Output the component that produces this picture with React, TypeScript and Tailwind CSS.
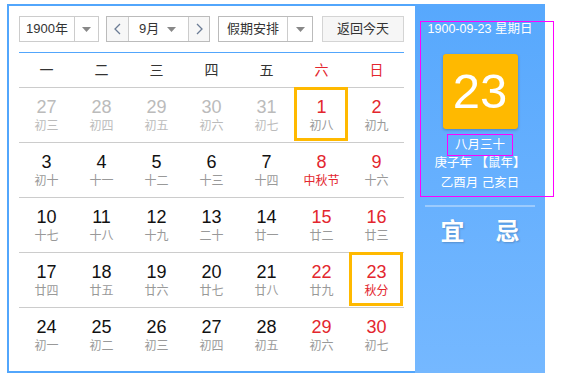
import React from "react";

type Day = {
  n: number;
  l: string;
  other?: boolean;
  red?: boolean;
  fest?: boolean;
  sel?: boolean;
};

const WEEK = ["一", "二", "三", "四", "五", "六", "日"];

const ROWS: Day[][] = [
  [
    { n: 27, l: "初三", other: true },
    { n: 28, l: "初四", other: true },
    { n: 29, l: "初五", other: true },
    { n: 30, l: "初六", other: true },
    { n: 31, l: "初七", other: true },
    { n: 1, l: "初八", red: true, sel: true },
    { n: 2, l: "初九", red: true },
  ],
  [
    { n: 3, l: "初十" },
    { n: 4, l: "十一" },
    { n: 5, l: "十二" },
    { n: 6, l: "十三" },
    { n: 7, l: "十四" },
    { n: 8, l: "中秋节", red: true, fest: true },
    { n: 9, l: "十六", red: true },
  ],
  [
    { n: 10, l: "十七" },
    { n: 11, l: "十八" },
    { n: 12, l: "十九" },
    { n: 13, l: "二十" },
    { n: 14, l: "廿一" },
    { n: 15, l: "廿二", red: true },
    { n: 16, l: "廿三", red: true },
  ],
  [
    { n: 17, l: "廿四" },
    { n: 18, l: "廿五" },
    { n: 19, l: "廿六" },
    { n: 20, l: "廿七" },
    { n: 21, l: "廿八" },
    { n: 22, l: "廿九", red: true },
    { n: 23, l: "秋分", red: true, fest: true, sel: true },
  ],
  [
    { n: 24, l: "初一" },
    { n: 25, l: "初二" },
    { n: 26, l: "初三" },
    { n: 27, l: "初四" },
    { n: 28, l: "初五" },
    { n: 29, l: "初六", red: true },
    { n: 30, l: "初七", red: true },
  ],
];

const Caret = () => (
  <svg width="9" height="5" viewBox="0 0 9 5">
    <path d="M0 0h9L4.5 5z" fill="#888" />
  </svg>
);

const Chevron = ({ dir }: { dir: "l" | "r" }) => (
  <svg width="7" height="12" viewBox="0 0 7 12">
    <path
      d={dir === "l" ? "M6 1L1 6l5 5" : "M1 1l5 5-5 5"}
      fill="none"
      stroke="#6b7c95"
      strokeWidth="1.3"
    />
  </svg>
);

const DayCell = ({ d }: { d: Day }) => {
  const numColor = d.other ? "text-[#bbbbbb]" : d.red ? "text-[#e3262e]" : "text-[#111]";
  const lunarColor = d.other ? "text-[#bbbbbb]" : d.fest ? "text-[#e3262e]" : "text-[#999]";
  return (
    <div className="relative h-[55px] border-t border-[#cccccc] flex flex-col items-center pt-[9px]">
      <div className={`text-[18px] leading-[20px] font-['Liberation_Sans'] ${numColor}`}>{d.n}</div>
      <div className={`mt-[1px] text-[12px] leading-[16px] ${lunarColor}`}>{d.l}</div>
      {d.sel && (
        <div className="absolute left-0 top-[-1px] w-[54px] h-[54px] border-[3px] border-[#ffb900]" />
      )}
    </div>
  );
};

export default function App() {
  return (
    <div className="w-[568px] h-[373px] bg-white pt-[4px] pl-[7px] text-[#333] font-['Liberation_Sans','Noto_Sans_CJK_SC',sans-serif]">
      <div className="flex w-[538px] h-[369px]">
        {/* calendar */}
        <div className="w-[408px] h-full border-2 border-r-0 border-[#52a6fc] pt-[10px] pl-[10px]">
          <div className="flex h-[26px] text-[13px]">
            <div className="flex w-[80px] border border-[#cccccc]">
              <div className="flex-1 flex items-center justify-center">1900年</div>
              <div className="w-[24px] border-l border-[#cccccc] flex items-center justify-center">
                <Caret />
              </div>
            </div>
            <div className="ml-[7px] flex w-[104px] border border-[#bbbbbb]">
              <div className="w-[22px] bg-[#f7f7f7] border-r border-[#cccccc] flex items-center justify-center">
                <Chevron dir="l" />
              </div>
              <div className="flex-1 flex items-center justify-between pl-[10px] pr-[12px]">
                <span>9月</span>
                <Caret />
              </div>
              <div className="w-[21px] bg-[#f7f7f7] border-l border-[#cccccc] flex items-center justify-center">
                <Chevron dir="r" />
              </div>
            </div>
            <div className="ml-[8px] flex w-[95px] border border-[#bbbbbb]">
              <div className="flex-1 flex items-center justify-center">假期安排</div>
              <div className="w-[25px] border-l border-[#cccccc] flex items-center justify-center">
                <Caret />
              </div>
            </div>
            <div className="ml-[9px] w-[82px] border border-[#d4d4d4] bg-[#f6f6f6] flex items-center justify-center">
              返回今天
            </div>
          </div>

          <div className="w-[385px] mt-[10px] border-t border-[#52a6fc]">
            <div className="grid grid-cols-7 h-[34px] items-center text-[14px]">
              {WEEK.map((w, i) => (
                <div key={w} className={`text-center ${i >= 5 ? "text-[#e3262e]" : "text-[#333]"}`}>
                  {w}
                </div>
              ))}
            </div>
            {ROWS.map((row, ri) => (
              <div key={ri} className="grid grid-cols-7">
                {row.map((d, di) => (
                  <DayCell key={di} d={d} />
                ))}
              </div>
            ))}
          </div>
        </div>

        {/* side panel */}
        <div className="w-[130px] h-full bg-gradient-to-b from-[#57a8fd] to-[#75b8ff] text-white pt-[17px]">
          <div className="ml-[5px] w-[134px] border border-[#ff00ff] pr-[14px] pb-[3px] flex flex-col items-center">
            <div className="text-[12.5px] leading-[14px]">1900-09-23 星期日</div>
            <div className="mt-[18px] w-[75px] h-[75px] rounded-[3px] bg-[#ffb900] shadow-[0_1px_3px_rgba(0,0,0,0.25)] flex items-center justify-center text-[49px] leading-none font-['Liberation_Sans']">
              23
            </div>
            <div className="mt-[5px] h-[22px] px-[7px] border border-[#ff00ff] text-[12.5px] leading-[20px]">
              八月三十
            </div>
            <div className="-mt-[3px] text-[12.5px] leading-[20px]">庚子年 【鼠年】</div>
            <div className="text-[12.5px] leading-[20px]">乙酉月 己亥日</div>
          </div>
          <div className="mx-auto mt-[8px] w-[110px] h-[2px] bg-[#9ccbfd]" />
          <div className="mt-[10px] flex justify-center gap-[31px] text-[24px] leading-[30px] font-bold [text-shadow:1px_1px_2px_rgba(0,0,0,0.2)]">
            <span>宜</span>
            <span>忌</span>
          </div>
        </div>
      </div>
    </div>
  );
}
